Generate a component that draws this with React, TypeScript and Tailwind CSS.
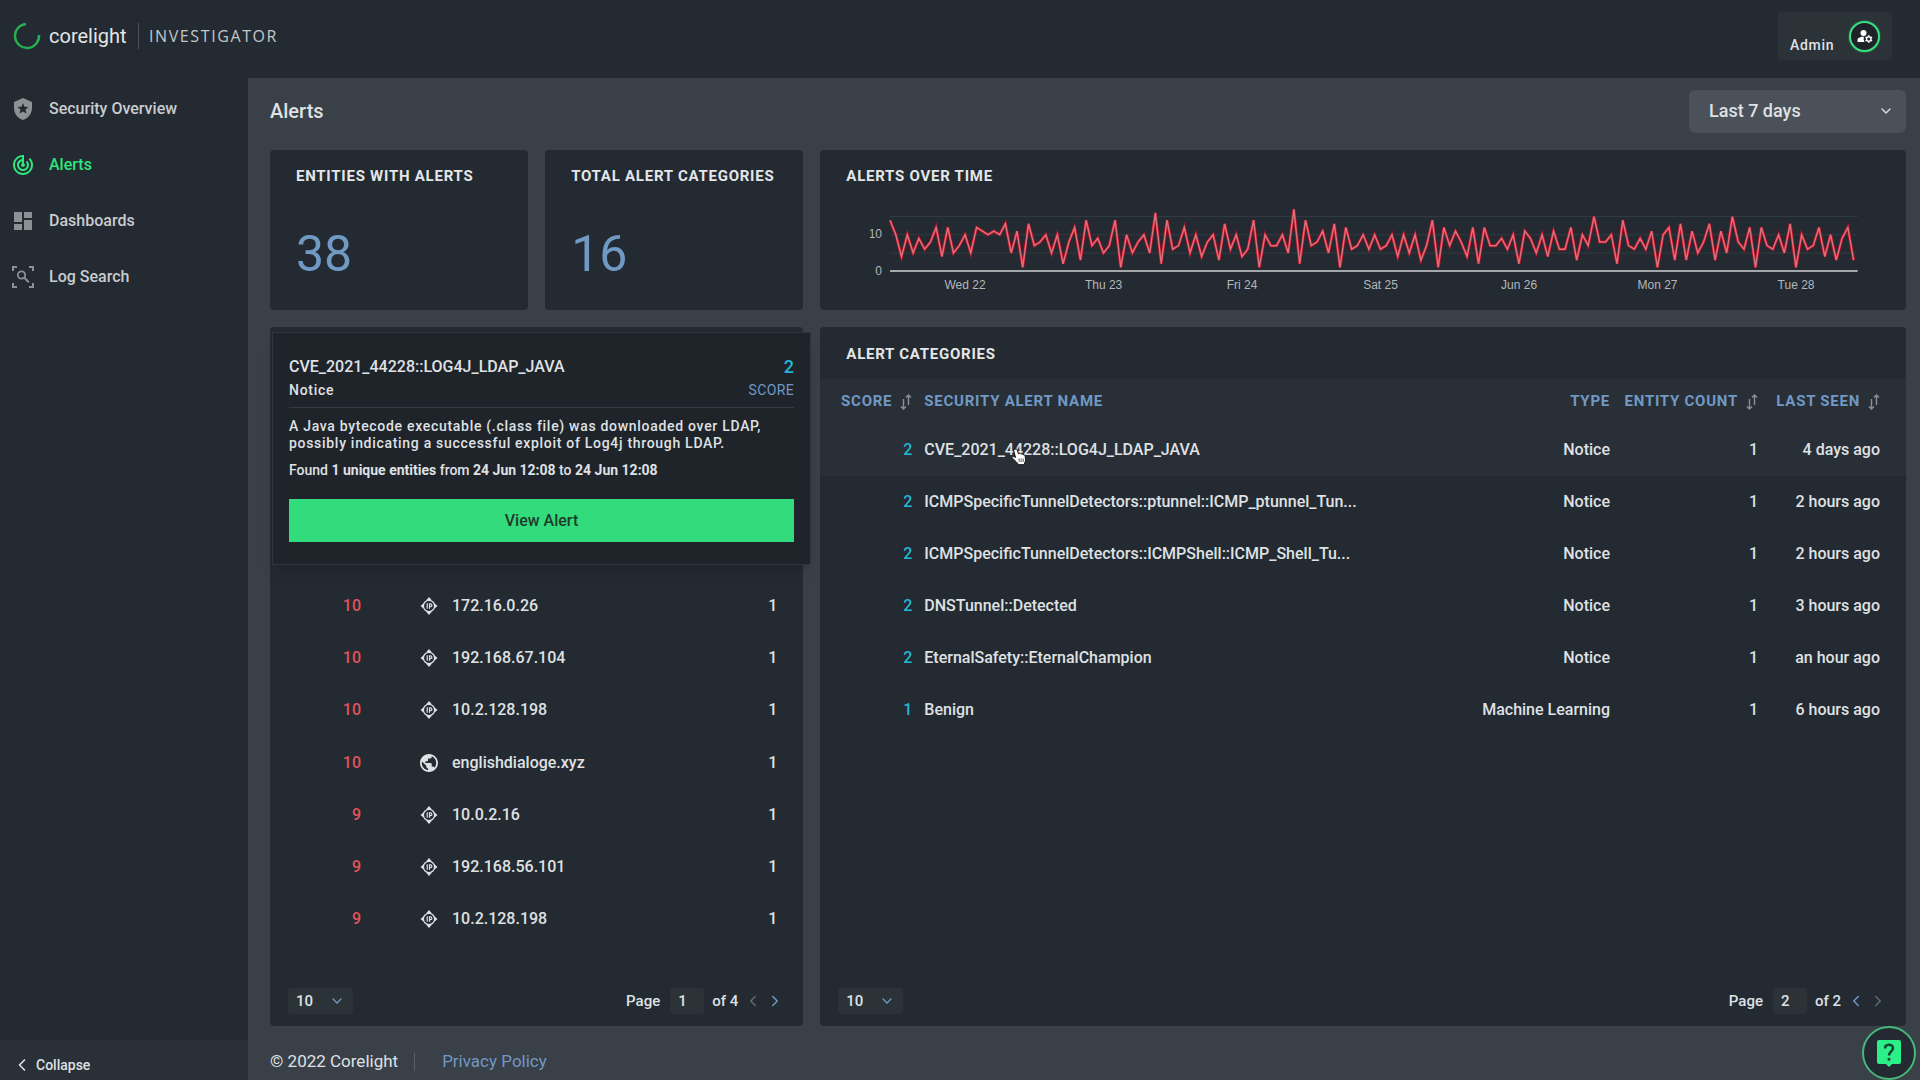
import { ReactNode } from "react";
import { ChevronDown, ChevronLeft, ChevronRight } from "lucide-react";
import {
  MdDashboard,
  MdLocalPolice,
  MdManageAccounts,
  MdPublic,
  MdTrackChanges,
} from "react-icons/md";
import clsx from "clsx";

// one value per hour, seven days
const alertsOverTime = [
  14, 10, 4, 10, 5, 9, 6, 8, 12, 4, 12, 5, 7, 10, 5, 12, 11, 10, 11, 10, 13, 5,
  11, 1, 13, 7, 8, 10, 5, 10, 2, 8, 12, 3, 14, 7, 9, 5, 7, 14, 1, 10, 5, 8, 10,
  5, 16, 2, 14, 6, 7, 12, 5, 10, 4, 8, 10, 3, 13, 6, 10, 4, 6, 14, 1, 10, 7, 7,
  10, 5, 17, 2, 14, 7, 8, 11, 5, 13, 1, 12, 6, 7, 10, 6, 10, 6, 7, 10, 4, 10, 5,
  10, 3, 7, 14, 1, 12, 7, 11, 8, 4, 12, 2, 12, 7, 7, 9, 6, 10, 2, 11, 9, 5, 10,
  4, 11, 6, 6, 12, 3, 10, 7, 15, 8, 8, 10, 2, 14, 7, 6, 9, 6, 11, 1, 10, 12, 3,
  13, 3, 11, 5, 8, 13, 3, 11, 5, 15, 8, 6, 12, 1, 12, 7, 6, 10, 5, 13, 1, 10, 6,
  7, 12, 4, 10, 3, 9, 12, 3,
];

const chartDays = ["Wed 22", "Thu 23", "Fri 24", "Sat 25", "Jun 26", "Mon 27", "Tue 28"];

const entities = [
  { score: 10, name: "172.16.0.26", type: "ip", count: 1 },
  { score: 10, name: "192.168.67.104", type: "ip", count: 1 },
  { score: 10, name: "10.2.128.198", type: "ip", count: 1 },
  { score: 10, name: "englishdialoge.xyz", type: "domain", count: 1 },
  { score: 9, name: "10.0.2.16", type: "ip", count: 1 },
  { score: 9, name: "192.168.56.101", type: "ip", count: 1 },
  { score: 9, name: "10.2.128.198", type: "ip", count: 1 },
];

const categories = [
  { score: 2, name: "CVE_2021_44228::LOG4J_LDAP_JAVA", type: "Notice", count: 1, seen: "4 days ago" },
  { score: 2, name: "ICMPSpecificTunnelDetectors::ptunnel::ICMP_ptunnel_Tun...", type: "Notice", count: 1, seen: "2 hours ago" },
  { score: 2, name: "ICMPSpecificTunnelDetectors::ICMPShell::ICMP_Shell_Tu...", type: "Notice", count: 1, seen: "2 hours ago" },
  { score: 2, name: "DNSTunnel::Detected", type: "Notice", count: 1, seen: "3 hours ago" },
  { score: 2, name: "EternalSafety::EternalChampion", type: "Notice", count: 1, seen: "an hour ago" },
  { score: 1, name: "Benign", type: "Machine Learning", count: 1, seen: "6 hours ago" },
];

const LogSearchIcon = () => (
  <svg viewBox="0 0 24 24" className="size-6" fill="none" stroke="currentColor" strokeWidth="2">
    <path d="M2 6V2h4M18 2h4v4M22 18v4h-4M6 22H2v-4" />
    <circle cx="10.5" cy="10" r="3.7" strokeWidth="1.8" />
    <path d="M13.3 12.8l4.5 4.5" />
  </svg>
);

const IpIcon = () => (
  <svg viewBox="0 0 18 18" className="size-[18px] shrink-0" fill="none" stroke="currentColor">
    <circle cx="9" cy="9" r="5.6" strokeWidth="1.3" />
    <path
      d="M9 0l3 3.4H6zM9 18l3-3.4H6zM.5 9l3.2-2.8v5.6zM17.5 9l-3.2-2.8v5.6z"
      fill="currentColor"
      stroke="none"
    />
    <path d="M7.2 6.3v5.4M9.5 11.7V6.9h1a1.4 1.4 0 0 1 0 2.8h-1" strokeWidth="1.2" />
  </svg>
);

const SortIcon = () => (
  <svg viewBox="0 0 12 16" className="h-4 w-3 text-[#8b9096]" fill="none" stroke="currentColor" strokeWidth="1.4">
    <path d="M3.5 5v10M1 12.5l2.5 2.5L6 12.5M8.5 11V1M6 3.5L8.5 1 11 3.5" />
  </svg>
);

const HandCursor = () => (
  <svg viewBox="0 0 16 18" className="absolute left-[99px] top-6 h-[18px] w-4">
    <path
      d="M4.2 1.2c1-.5 1.8.1 2.1 1l1.2 3.6c.8-.8 2-.5 2.3.3.9-.5 1.9-.2 2.2.7 1-.3 1.9.2 2.1 1.3l.5 3.4c.1 1.3-.4 2.4-1 3.5v1.7H7.2c-.3-1.5-1.700-2.600-2.900-3.800L1.200 10c-.7-1 .4-2 1.500-1.500l1.800 1L2.800 3c-.2-.8.4-1.500 1.400-1.800z"
      fill="#fff"
      stroke="#111"
    />
    <path d="M8.2 10.5v3.5M10.2 10.5v3.5M12.2 10.5v3.5" stroke="#333" strokeWidth=".8" />
  </svg>
);

const navItems = [
  { name: "Security Overview", icon: <MdLocalPolice className="size-6" /> },
  { name: "Alerts", icon: <MdTrackChanges className="size-6" />, active: true },
  { name: "Dashboards", icon: <MdDashboard className="size-6" /> },
  { name: "Log Search", icon: <LogSearchIcon /> },
];

const Header = () => (
  <header className="flex h-[78px] items-start justify-between bg-[#232a31] pl-[13px] pr-7">
    <div className="flex items-center pt-[22px]">
      <svg viewBox="0 0 28 28" className="size-7" fill="none">
        <path d="M13 2A12 12 0 1 0 26 13" stroke="#27ae52" strokeWidth="2.5" />
      </svg>
      <span className="ml-2 w-[79px] text-xl font-normal leading-7 text-[#e3e5e7]">corelight</span>
      <div className="ml-2.5 h-[26px] w-px bg-[#4a5158]" />
      <span className="ml-2.5 font-['Open_Sans',sans-serif] text-base font-normal tracking-widest text-[#c3c7cb]">
        INVESTIGATOR
      </span>
    </div>
    <button className="mt-3 flex h-12 w-[114px] items-center justify-between rounded bg-[#2c3338] px-3">
      <span className="pt-[18px] text-sm tracking-wider">Admin</span>
      <span className="grid size-[31px] place-items-center rounded-full border-2 border-[#3ddc84] bg-[#1d2329] shadow-[0_0_2px_#16a34a]">
        <MdManageAccounts className="size-[18px] text-white" />
      </span>
    </button>
  </header>
);

const SideNav = () => (
  <nav className="flex w-[248px] shrink-0 flex-col bg-[#232a31]">
    <ul className="flex-1 pt-[3px]">
      {navItems.map((item) => (
        <li key={item.name}>
          <a
            href="#"
            className={clsx(
              "flex h-14 items-center gap-3.5 pl-[11px] text-base",
              item.active ? "text-[#2fe57d]" : "text-[#c9ccd0]",
            )}
          >
            <span className={item.active ? "text-[#2fe57d]" : "text-[#8d9196]"}>{item.icon}</span>
            {item.name}
          </a>
        </li>
      ))}
    </ul>
    <button className="flex h-10 items-center gap-1 bg-[#293037] pl-3 pt-2.5 text-sm">
      <ChevronLeft className="size-5" />
      Collapse
    </button>
  </nav>
);

const CardTitle = ({ children }: { children: ReactNode }) => (
  <h2 className="text-[15px] font-bold leading-5 tracking-wider text-[#e4e6e8]">{children}</h2>
);

const StatCard = ({ title, value }: { title: string; value: number }) => (
  <section className="h-40 rounded bg-[#232a31] px-[26px] pt-4">
    <CardTitle>{title}</CardTitle>
    <p className="mt-10 text-[50px] font-normal leading-[56px] text-[#7099c4]">{value}</p>
  </section>
);

const AlertsChart = () => {
  const toY = (value: number) => 65 - value * 3.63;
  const points = alertsOverTime
    .map((value, i) => `${(20 + i * 5.766).toFixed(1)},${toY(value).toFixed(1)}`)
    .join(" ");

  return (
    <svg
      viewBox="0 0 988 90"
      className="block w-full"
      fontFamily="Liberation Sans, sans-serif"
      fontSize="12"
      fontWeight="400"
    >
      {[5, 10, 15].map((tick) => (
        <line key={tick} x1="20" x2="987" y1={toY(tick)} y2={toY(tick)} stroke="#323a41" />
      ))}
      <polyline points={points} fill="none" stroke="#b80f26" strokeWidth="3" />
      <polyline points={points} fill="none" stroke="#d9707a" strokeWidth="1.5" />
      <line x1="20" x2="987" y1="65" y2="65" stroke="#a5a8ab" strokeWidth="2" />
      <g fill="#b3b7bb">
        <text x="12" y="32" textAnchor="end">10</text>
        <text x="12" y="69" textAnchor="end">0</text>
        {chartDays.map((day, i) => (
          <text key={day} x={95 + i * 138.4} y="83" textAnchor="middle">
            {day}
          </text>
        ))}
      </g>
    </svg>
  );
};

const Pagination = ({ page, total }: { page: number; total: number }) => (
  <div className="flex items-center justify-between pb-3 pl-[18px] pr-[19px] text-[15px]">
    <div className="relative flex items-center">
      <select aria-label="Rows per page" className="h-[26px] w-[65px] appearance-none rounded bg-[#2c3338] pl-2">
        <option>10</option>
      </select>
      <ChevronDown className="pointer-events-none absolute right-2 size-4 text-[#7099c4]" />
    </div>
    <div className="flex items-center">
      <label className="flex items-center gap-2.5">
        Page
        <input defaultValue={page} className="h-[26px] w-[34px] rounded bg-[#2c3338] pl-2" />
      </label>
      <span className="ml-2">of {total}</span>
      <button aria-label="Previous page" className={clsx("ml-1.5", page > 1 ? "text-[#7099c4]" : "text-[#626a72]")}>
        <ChevronLeft className="size-[18px]" />
      </button>
      <button aria-label="Next page" className={clsx("ml-1", page < total ? "text-[#7099c4]" : "text-[#626a72]")}>
        <ChevronRight className="size-[18px]" />
      </button>
    </div>
  </div>
);

const AlertPopover = () => (
  <div className="absolute left-0.5 top-[5px] z-10 h-[233px] w-[539px] border border-[#30363d] bg-[#1f242a] px-4 pt-[22px] shadow-lg">
    <div className="flex justify-between border-b border-[#353b42] pb-1.5">
      <div>
        <h3 className="text-base leading-6">CVE_2021_44228::LOG4J_LDAP_JAVA</h3>
        <p className="text-sm leading-[22px] tracking-wider">Notice</p>
      </div>
      <div className="text-right">
        <p className="text-lg leading-6 text-[#22b8d6]">2</p>
        <p className="text-sm font-normal leading-[22px] tracking-wide text-[#7099c4]">SCORE</p>
      </div>
    </div>
    <p className="mt-2.5 text-sm leading-[17px] tracking-wider">
      A Java bytecode executable (.class file) was downloaded over LDAP, possibly indicating a successful
      exploit of Log4j through LDAP.
    </p>
    <p className="mt-2 text-sm leading-5">
      Found <b>1 unique entities</b> from <b>24 Jun 12:08</b> to <b>24 Jun 12:08</b>
    </p>
    <button className="mt-[19px] h-[43px] w-full bg-[#32db7b] text-base text-[#1f3a2c]">View Alert</button>
  </div>
);

const EntitiesCard = () => (
  <section className="relative flex flex-col rounded bg-[#232a31]">
    <AlertPopover />
    <table aria-label="Entities" className="mt-[253px] w-full table-fixed text-base">
      <colgroup>
        <col className="w-[91px]" />
        <col />
        <col className="w-20" />
      </colgroup>
      <tbody>
        {entities.map((entity, i) => (
          <tr key={i} className={entity.type === "domain" ? "h-[53px]" : "h-[52px]"}>
            <td className="text-right text-[#e0525a]">{entity.score}</td>
            <td className="pl-[59px]">
              <span className="flex items-center gap-3.5">
                {entity.type === "ip" ? <IpIcon /> : <MdPublic className="size-[18px] shrink-0 scale-120" />}
                {entity.name}
              </span>
            </td>
            <td className="pr-[26px] text-right">{entity.count}</td>
          </tr>
        ))}
      </tbody>
    </table>
    <div className="mt-auto">
      <Pagination page={1} total={4} />
    </div>
  </section>
);

const CategoriesCard = () => (
  <section className="flex flex-col rounded bg-[#232a31]">
    <div className="h-[52px] px-[26px] pt-[17px]">
      <CardTitle>ALERT CATEGORIES</CardTitle>
    </div>
    <table className="w-full table-fixed text-base">
      <thead className="bg-[#292f37] text-[15px] tracking-wider text-[#7099c4]">
        <tr className="h-[45px]">
          <th className="w-[92px]">
            <span className="flex items-center justify-end gap-2">
              SCORE <SortIcon />
            </span>
          </th>
          <th className="pl-3 text-left">SECURITY ALERT NAME</th>
          <th className="w-[170px] text-right">TYPE</th>
          <th className="w-[148px]">
            <span className="flex items-center justify-end gap-2">
              ENTITY COUNT <SortIcon />
            </span>
          </th>
          <th className="w-[148px] pr-[26px]">
            <span className="flex items-center justify-end gap-2">
              LAST SEEN <SortIcon />
            </span>
          </th>
        </tr>
      </thead>
      <tbody>
        {categories.map((category, i) => (
          <tr key={category.name} className={clsx("h-[52px]", i === 0 && "bg-[#292f37]")}>
            <td className="text-right text-[#22b8d6]">{category.score}</td>
            <td className="relative pl-3">
              {category.name}
              {i === 0 && <HandCursor />}
            </td>
            <td className="text-right">{category.type}</td>
            <td className="text-right">{category.count}</td>
            <td className="pr-[26px] text-right">{category.seen}</td>
          </tr>
        ))}
      </tbody>
    </table>
    <div className="mt-auto">
      <Pagination page={2} total={2} />
    </div>
  </section>
);

export default function App() {
  return (
    <div className="flex min-h-screen flex-col bg-[#3a4047] font-[Roboto,sans-serif] font-medium text-[#dfe1e4]">
      <Header />
      <div className="flex flex-1">
        <SideNav />
        <main className="flex min-w-0 flex-1 flex-col pl-[22px] pr-3.5">
          <div className="flex h-[72px] items-center justify-between pb-1.5">
            <h1 className="text-xl">Alerts</h1>
            <div className="relative flex items-center">
              <select
                aria-label="Time range"
                className="h-[43px] w-[217px] appearance-none rounded-md bg-[#4b5159] pl-5 text-lg"
              >
                <option>Last 7 days</option>
              </select>
              <ChevronDown className="pointer-events-none absolute right-3 size-4" />
            </div>
          </div>
          <div className="grid flex-1 grid-cols-[258fr_258fr_1085fr] grid-rows-[auto_1fr] gap-[17px]">
            <StatCard title="ENTITIES WITH ALERTS" value={38} />
            <StatCard title="TOTAL ALERT CATEGORIES" value={16} />
            <section className="h-40 rounded bg-[#232a31] pt-4">
              <div className="px-[26px]">
                <CardTitle>ALERTS OVER TIME</CardTitle>
              </div>
              <div className="mt-5 pl-[50px] pr-[47px]">
                <AlertsChart />
              </div>
            </section>
            <div className="col-span-2 grid">
              <EntitiesCard />
            </div>
            <CategoriesCard />
          </div>
          <footer className="flex h-[54px] items-center pt-[18px] text-[17px] font-normal">
            <span>© 2022 Corelight</span>
            <span className="ml-4 mr-[27px] h-[18px] w-px bg-[#5a6067]" />
            <a href="#" className="text-[#7099c4]">
              Privacy Policy
            </a>
          </footer>
        </main>
      </div>
      <button
        aria-label="Help"
        className="fixed bottom-0 right-1 grid size-[54px] place-items-center rounded-full border-2 border-[#46b87a] bg-[#232a31]"
      >
        <svg viewBox="0 0 26 28" className="h-7 w-[26px]">
          <path d="M3 1h20a2 2 0 0 1 2 2v20a2 2 0 0 1-2 2h-7l-3 3-3-3H3a2 2 0 0 1-2-2V3a2 2 0 0 1 2-2z" fill="#2bf08a" />
          <path d="M9 9.5c0-5 8-5 8-.5 0 3.5-4 3.5-4 7.5" fill="none" stroke="#17452f" strokeWidth="2.5" />
          <rect x="11.7" y="19" width="2.6" height="2.6" fill="#17452f" />
        </svg>
      </button>
    </div>
  );
}
